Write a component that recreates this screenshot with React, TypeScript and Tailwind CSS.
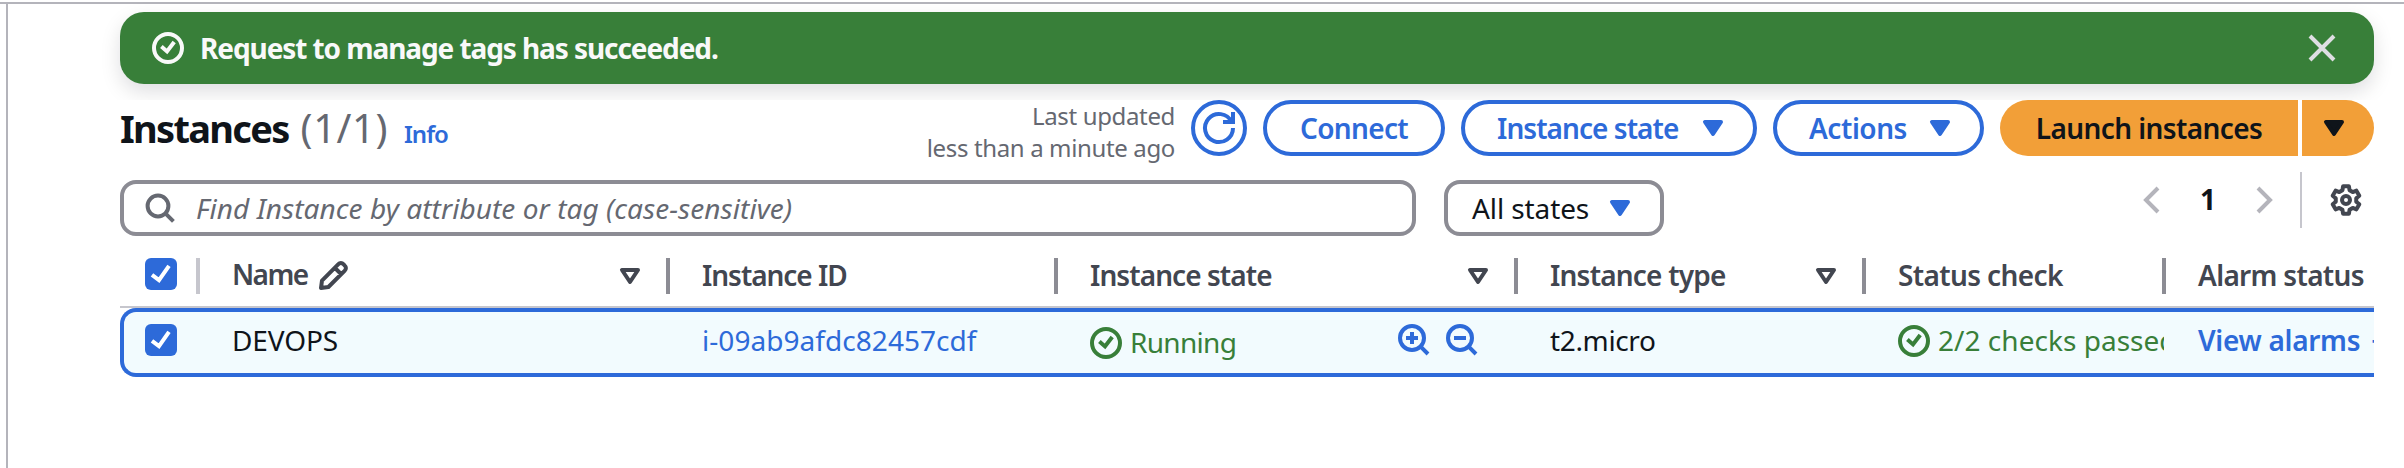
import type { ReactNode } from "react";

function Icon({ children, className = "" }: { children: ReactNode; className?: string }) {
  return (
    <svg viewBox="0 0 16 16" fill="none" stroke="currentColor" strokeWidth="2" className={"block size-8 shrink-0 overflow-visible " + className}>
      {children}
    </svg>
  );
}

const StatusPositive = ({ className = "" }: { className?: string }) => (
  <Icon className={className}>
    <circle cx="8" cy="8" r="7" />
    <path d="M4.7 7.3 7.5 9.7 11.1 5" />
  </Icon>
);

const Caret = ({ className = "" }: { className?: string }) => (
  <Icon className={className}>
    <path d="M4 5h8l-4 6z" fill="currentColor" strokeLinejoin="round" />
  </Icon>
);

const SortCaret = () => (
  <Icon className="mr-5 text-[#424650]">
    <path d="M4 5h8l-4 6z" strokeLinejoin="round" />
  </Icon>
);

const gearPoints = [0, 1, 2, 3, 4, 5]
  .flatMap((i) =>
    [
      [-20, 5.2],
      [-12, 7],
      [12, 7],
      [20, 5.2],
    ].map(([offset, radius]) => {
      const angle = ((i * 60 - 90 + offset) * Math.PI) / 180;
      return `${(8 + radius * Math.cos(angle)).toFixed(2)},${(8 + radius * Math.sin(angle)).toFixed(2)}`;
    }),
  )
  .join(" ");

const Checkbox = () => (
  <svg viewBox="0 0 16 16" fill="none" className="block size-8 shrink-0 rounded-[6px] bg-[#2d6ad9]">
    <path d="M3.5 8.4 7 11.1 12 3.9" stroke="#fff" strokeWidth="2" />
  </svg>
);

const Divider = ({ className = "bg-[#8c8c94]" }: { className?: string }) => (
  <span className={"h-9 w-1 shrink-0 " + className} />
);

function HeaderCell({ width, label, tracking, sortable = false, divider = true }: { width: string; label: string; tracking: string; sortable?: boolean; divider?: boolean }) {
  return (
    <div className={"flex h-full shrink-0 items-center pl-8 " + width}>
      <span className={"flex-1 pb-[2px] font-semibold text-[#424650] " + tracking}>{label}</span>
      {sortable && <SortCaret />}
      {divider && <Divider />}
    </div>
  );
}

export default function App() {
  return (
    <div className="flex h-[468px] w-[2404px] flex-col overflow-hidden bg-white pt-[2px] font-['Noto_Sans',sans-serif] text-[28px] leading-9 whitespace-nowrap text-[#0f141a]">
      <div className="h-[2px] bg-[#b4b4bb]" />
      <div className="ml-[6px] flex-1 border-l-2 border-[#b4b4bb] pt-2">
        <div className="mr-[30px] ml-28 flex h-[72px] items-center rounded-[24px] bg-[#387f39] pr-9 pl-8 text-[#f9f9f9] shadow-[0_8px_20px_rgba(0,7,22,0.13)]">
          <StatusPositive />
          <span className="ml-4 flex-1 pb-px font-bold tracking-[-1.08px]">Request to manage tags has succeeded.</span>
          <Icon className="text-[#dedee3]">
            <path d="m2 2 12 12M14 2 2 14" />
          </Icon>
        </div>

        <div className="mt-4 bg-white pr-[30px] pl-28">
          <div className="flex h-14 items-start">
            <div className="mt-1 flex flex-1 items-baseline leading-[48px]">
              <h1 className="text-[38px] font-bold tracking-[-1.7px]">Instances</h1>
              <span className="ml-[12px] text-[40px] tracking-[0.54px] text-[#656871]">(1/1)</span>
              <a className="ml-4 text-[24px] font-semibold tracking-[-1px] text-[#2d6ad9]">Info</a>
            </div>
            <div className="mr-4 text-right text-[24px] leading-8 text-[#656871]">
              <div className="tracking-[-0.35px]">Last updated</div>
              <div className="tracking-[-0.36px]">less than a minute ago</div>
            </div>
            <div className="flex gap-4 font-semibold text-[#2d6ad9]">
              <button className="flex size-14 items-center justify-center rounded-full border-4 border-[#2d6ad9]">
                <Icon>
                  <path d="M15 8a7 7 0 1 1-.75-3.15" />
                  <path d="M10 5h5V0" />
                </Icon>
              </button>
              <button className="flex h-14 w-[182px] items-center justify-center rounded-full border-4 border-[#2d6ad9] pb-px tracking-[-0.65px]">Connect</button>
              <button className="flex h-14 w-[296px] items-center justify-between rounded-full border-4 border-[#2d6ad9] pr-6 pl-8">
                <span className="pb-px tracking-[-0.95px]">Instance state</span>
                <Caret />
              </button>
              <button className="flex h-14 w-[211px] items-center justify-between rounded-full border-4 border-[#2d6ad9] pr-6 pl-8">
                <span className="pb-px tracking-[-0.45px]">Actions</span>
                <Caret />
              </button>
              <div className="flex gap-1 text-[#0f141a]">
                <button className="h-14 w-[298px] rounded-l-full bg-[#f29f38] pb-px tracking-[-0.6px]">Launch instances</button>
                <button className="flex h-14 w-[72px] items-center rounded-r-full bg-[#f29f38] pl-4">
                  <Caret />
                </button>
              </div>
            </div>
          </div>

          <div className="mt-4 flex h-16 items-start">
            <div className="mt-2 flex h-14 w-[1296px] items-center rounded-[16px] border-4 border-[#8c8c94] pl-5 text-[#656871]">
              <Icon>
                <circle cx="7" cy="7" r="5.2" />
                <path d="m10.7 10.7 4 4" />
              </Icon>
              <span className="ml-5 tracking-[0.07px] italic">Find Instance by attribute or tag (case-sensitive)</span>
            </div>
            <div className="mt-2 ml-7 flex h-14 w-[220px] items-center justify-between rounded-[16px] border-4 border-[#8c8c94] px-6">
              <span className="pb-px tracking-[-0.1px]">All states</span>
              <Caret className="text-[#2d6ad9]" />
            </div>
            <div className="ml-auto flex h-14 items-center pr-3">
              <Icon className="text-[#b4b4bb]">
                <path d="M11 2 5 8l6 6" />
              </Icon>
              <span className="w-20 pb-[2px] text-center font-bold">1</span>
              <Icon className="text-[#b4b4bb]">
                <path d="m5 2 6 6-6 6" />
              </Icon>
              <span className="mr-7 ml-5 h-14 w-[2px] bg-[#c6c6cd]" />
              <Icon className="text-[#424650]">
                <polygon points={gearPoints} strokeLinejoin="round" />
                <circle cx="8" cy="8" r="2" />
              </Icon>
            </div>
          </div>

          <div className="mt-[10px] overflow-hidden">
            <div className="flex h-[62px] items-center border-b-2 border-[#c6c6cd]">
              <div className="flex w-20 shrink-0 items-center pl-[25px]">
                <div className="flex-1 pb-1">
                  <Checkbox />
                </div>
                <Divider className="bg-[#c6c6cd]" />
              </div>
              <div className="flex h-full w-[470px] shrink-0 items-center pl-8">
                <span className="pb-1 font-semibold tracking-[-1.6px] text-[#424650]">Name</span>
                <Icon className="mr-auto ml-[10px] text-[#424650]">
                  <path d="M2 14l.5-3.7 8.2-8.2a1.7 1.7 0 0 1 2.5 0l.7.7a1.7 1.7 0 0 1 0 2.5L5.7 13.5zM9 4l3 3" strokeLinejoin="round" />
                </Icon>
                <SortCaret />
                <Divider />
              </div>
              <HeaderCell width="w-[388px]" label="Instance ID" tracking="tracking-[-1.05px]" />
              <HeaderCell width="w-[460px]" label="Instance state" tracking="tracking-[-0.93px]" sortable />
              <HeaderCell width="w-[348px]" label="Instance type" tracking="tracking-[-0.8px]" sortable />
              <HeaderCell width="w-[300px]" label="Status check" tracking="tracking-[-0.63px]" />
              <HeaderCell width="w-[208px]" label="Alarm status" tracking="tracking-[-0.68px]" divider={false} />
            </div>

            <div className="flex h-[69px] items-center rounded-l-[16px] border-y-4 border-l-4 border-[#2d6ad9] bg-[#f2fbfe] pb-[5px]">
              <div className="w-[76px] shrink-0 pl-[21px]">
                <Checkbox />
              </div>
              <div className="w-[470px] shrink-0 pl-8 tracking-[-0.1px]">DEVOPS</div>
              <div className="w-[388px] shrink-0 pl-8 tracking-[0.05px] text-[#2d6ad9]">i-09ab9afdc82457cdf</div>
              <div className="flex w-[460px] shrink-0 items-center pl-8">
                <div className="flex flex-1 items-center pt-[5px] text-[#387f39]">
                  <StatusPositive />
                  <span className="ml-2 pb-px tracking-[-0.7px]">Running</span>
                </div>
                <div className="mr-10 flex gap-4 text-[#2d6ad9]">
                  <Icon>
                    <circle cx="7" cy="7" r="6" />
                    <path d="m11.2 11.2 3.8 3.8M4 7h6M7 4v6" />
                  </Icon>
                  <Icon>
                    <circle cx="7" cy="7" r="6" />
                    <path d="m11.2 11.2 3.8 3.8M4 7h6" />
                  </Icon>
                </div>
              </div>
              <div className="w-[348px] shrink-0 pl-8 tracking-[-0.35px]">t2.micro</div>
              <div className="w-[300px] shrink-0 pr-[2px] pl-8">
                <div className="flex items-center overflow-hidden text-[#387f39]">
                  <StatusPositive className="mt-[2px]" />
                  <span className="ml-2 tracking-[0.03px]">2/2 checks passed</span>
                </div>
              </div>
              <div className="flex w-[208px] shrink-0 gap-[11px] overflow-hidden pl-8 font-semibold text-[#2d6ad9]">
                <span className="tracking-[-0.3px]">View alarms</span>
                <span>+</span>
              </div>
            </div>
          </div>
        </div>
      </div>
    </div>
  );
}
